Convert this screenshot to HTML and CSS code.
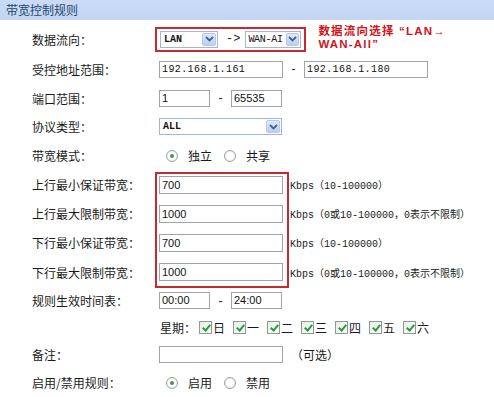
FILE: index.html
```html
<!DOCTYPE html>
<html lang="zh">
<head>
<meta charset="utf-8">
<link rel="stylesheet" href="styles.css">
</head>
<body>
<div class="panel">
  <div class="title">带宽控制规则</div>
  <div class="form">
    <div class="row r1">
      <div class="label">数据流向：</div>
      <div class="field">
        <div class="flowbox">
          <div class="select s-lan"><span class="sv bold">LAN</span><span class="arrow"><svg width="9" height="6" viewBox="0 0 9 6"><path d="M1 1 L4.5 4.5 L8 1" fill="none" stroke="#4d6185" stroke-width="1.8"/></svg></span></div>
          <span class="to">-&gt;</span>
          <div class="select s-wan"><span class="sv">WAN-AI</span><span class="arrow"><svg width="9" height="6" viewBox="0 0 9 6"><path d="M1 1 L4.5 4.5 L8 1" fill="none" stroke="#4d6185" stroke-width="1.8"/></svg></span></div>
        </div>
        <div class="note"><div>数据流向选择 “LAN→</div><div>WAN-All”</div></div>
      </div>
    </div>
    <div class="row r2">
      <div class="label">受控地址范围：</div>
      <div class="field">
        <div class="input w124 mono">192.168.1.161</div>
        <span class="dash">-</span>
        <div class="input w124 mono">192.168.1.180</div>
      </div>
    </div>
    <div class="row r3">
      <div class="label">端口范围：</div>
      <div class="field">
        <div class="input w51">1</div>
        <span class="dash">-</span>
        <div class="input w51">65535</div>
      </div>
    </div>
    <div class="row r4">
      <div class="label">协议类型：</div>
      <div class="field">
        <div class="select s-proto"><span class="sv bold">ALL</span><span class="arrow"><svg width="9" height="6" viewBox="0 0 9 6"><path d="M1 1 L4.5 4.5 L8 1" fill="none" stroke="#4d6185" stroke-width="1.8"/></svg></span></div>
      </div>
    </div>
    <div class="row r5">
      <div class="label">带宽模式：</div>
      <div class="field radios">
        <span class="radio on"></span><span class="rtext">独立</span>
        <span class="radio"></span><span class="rtext">共享</span>
      </div>
    </div>
    <div class="bw">
      <div class="row r6">
        <div class="label">上行最小保证带宽：</div>
        <div class="field"><div class="input w124 tall">700</div><span class="hint">Kbps（10-100000）</span></div>
      </div>
      <div class="row r7">
        <div class="label">上行最大限制带宽：</div>
        <div class="field"><div class="input w124 tall">1000</div><span class="hint">Kbps（0或10-100000，0表示不限制）</span></div>
      </div>
      <div class="row r8">
        <div class="label">下行最小保证带宽：</div>
        <div class="field"><div class="input w124 tall">700</div><span class="hint">Kbps（10-100000）</span></div>
      </div>
      <div class="row r9">
        <div class="label">下行最大限制带宽：</div>
        <div class="field"><div class="input w124 tall">1000</div><span class="hint">Kbps（0或10-100000，0表示不限制）</span></div>
      </div>
      <div class="bwbox"></div>
    </div>
    <div class="row r10">
      <div class="label">规则生效时间表：</div>
      <div class="field">
        <div class="input w51">00:00</div>
        <span class="dash">-</span>
        <div class="input w51">24:00</div>
      </div>
    </div>
    <div class="row r11">
      <div class="label"></div>
      <div class="field days">
        <span class="week">星期：</span>
        <span class="day"><span class="cb"></span>日</span>
        <span class="day"><span class="cb"></span>一</span>
        <span class="day"><span class="cb"></span>二</span>
        <span class="day"><span class="cb"></span>三</span>
        <span class="day"><span class="cb"></span>四</span>
        <span class="day"><span class="cb"></span>五</span>
        <span class="day"><span class="cb"></span>六</span>
      </div>
    </div>
    <div class="row r12">
      <div class="label">备注：</div>
      <div class="field"><div class="input w124"></div><span class="opt">（可选）</span></div>
    </div>
    <div class="row r13">
      <div class="label">启用/禁用规则：</div>
      <div class="field radios">
        <span class="radio on"></span><span class="rtext">启用</span>
        <span class="radio"></span><span class="rtext">禁用</span>
      </div>
    </div>
  </div>
</div>
</body>
</html>
```

FILE: styles.css
```css
* { box-sizing: border-box; }
html, body { margin: 0; padding: 0; background: #fff; }
body {
  width: 494px;
  height: 397px;
  overflow: hidden;
  font-family: "Noto Sans CJK SC", "Noto Sans", sans-serif;
  font-size: 12px;
  color: #1a1a1a;
}
.title {
  height: 20px;
  line-height: 19px;
  padding-left: 6px;
  background: linear-gradient(#c9dbf6, #c2d5f3);
  color: #27466b;
  font-size: 12px;
}
.form { padding-top: 4px; }
.row {
  display: flex;
  align-items: center;
}
.label {
  width: 159px;
  flex: none;
  padding-left: 32px;
  white-space: nowrap;
}
.field {
  display: flex;
  align-items: center;
}
.r1 { height: 30px; }
.r2 { height: 30px; }
.r3 { height: 28px; }
.r4 { height: 29px; }
.r5 { height: 29px; }
.r6, .r7, .r8 { height: 29px; }
.r9 { height: 30px; }
.r10 { height: 27px; }
.r11 { height: 26px; }
.r12 { height: 28px; }
.r13 { height: 29px; }

.flowbox {
  display: flex;
  align-items: center;
  margin-left: -4px;
  height: 25px;
  border: 2px solid #c42a2f;
  padding: 0 3px 0 3px;
}
.select {
  height: 17px;
  border: 1px solid #a5b7cc;
  display: flex;
  align-items: center;
  justify-content: space-between;
  background: #fff;
  padding: 1px 1px 1px 3px;
  white-space: nowrap;
  flex: none;
}
.s-lan { width: 58px; }
.s-wan { width: 56px; padding-left: 2px; }
.s-proto { width: 123px; }
.sv {
  font-family: "Liberation Mono", monospace;
  font-size: 10px;
  color: #111;
  white-space: nowrap;
}
.s-wan .sv { letter-spacing: -0.3px; }
.sv.bold { font-weight: bold; }
.arrow {
  width: 14px;
  height: 13px;
  background: linear-gradient(#dfe8fc, #b9cdf7);
  border: 1px solid #b6c8ef;
  border-radius: 2px;
  display: flex;
  align-items: center;
  justify-content: center;
  flex: none;
}
.s-wan .arrow { width: 13px; }
.to {
  font-family: "Liberation Mono", monospace;
  font-size: 12px;
  margin: 0 5px 0 8px;
  color: #222;
  white-space: nowrap;
}
.note {
  margin-left: 12px;
  margin-top: -2px;
  color: #d0141c;
  font-weight: bold;
  font-size: 11.5px;
  line-height: 13px;
  font-family: "Liberation Sans", "Noto Sans CJK SC", sans-serif;
  letter-spacing: 1.2px;
  white-space: nowrap;
}
.input {
  height: 17px;
  border: 1px solid #a0a4a8;
  background: #fff;
  font-family: "Liberation Sans", sans-serif;
  font-size: 11px;
  line-height: 15px;
  padding-left: 2px;
  color: #111;
  white-space: nowrap;
  flex: none;
}
.input.tall { height: 18px; line-height: 16px; }
.mono { font-family: "Liberation Mono", monospace; font-size: 10px; letter-spacing: 0.4px; }
.w124 { width: 124px; }
.w51 { width: 51px; }
.dash {
  width: 21px;
  text-align: center;
  font-family: "Liberation Sans", sans-serif;
}
.hint {
  margin-left: 7px;
  font-family: "Liberation Mono", "Noto Sans CJK SC", monospace;
  font-size: 10px;
  color: #1a1a1a;
  white-space: nowrap;
}
.opt {
  margin-left: 8px;
  font-size: 12px;
}
.radios { padding-left: 7px; }
.radio {
  width: 12px;
  height: 12px;
  border-radius: 50%;
  border: 1px solid #9aa3a0;
  background: radial-gradient(circle, #fff 40%, #e6e8e4 100%);
  position: relative;
  flex: none;
}
.radio.on::after {
  content: "";
  position: absolute;
  left: 3px;
  top: 3px;
  width: 4px;
  height: 4px;
  border-radius: 50%;
  background: #3c9b4f;
}
.rtext { margin: 0 12px 0 10px; }
.bw { position: relative; }
.bwbox {
  position: absolute;
  left: 155px;
  top: 2px;
  width: 134px;
  height: 116px;
  border: 2px solid #c42a2f;
  pointer-events: none;
}
.days { padding-left: 1px; }
.week { margin-right: 3px; }
.day {
  display: flex;
  align-items: center;
  margin-right: 8px;
}
.cb {
  width: 13px;
  height: 13px;
  border: 1px solid #8a9a94;
  background: linear-gradient(135deg, #e8ece6, #fff);
  margin-right: 1px;
  position: relative;
  flex: none;
}
.cb::after {
  content: "";
  position: absolute;
  left: 3.5px;
  top: 1px;
  width: 3px;
  height: 6px;
  border: solid #2a9a3a;
  border-width: 0 2px 2px 0;
  transform: rotate(40deg);
}
```
